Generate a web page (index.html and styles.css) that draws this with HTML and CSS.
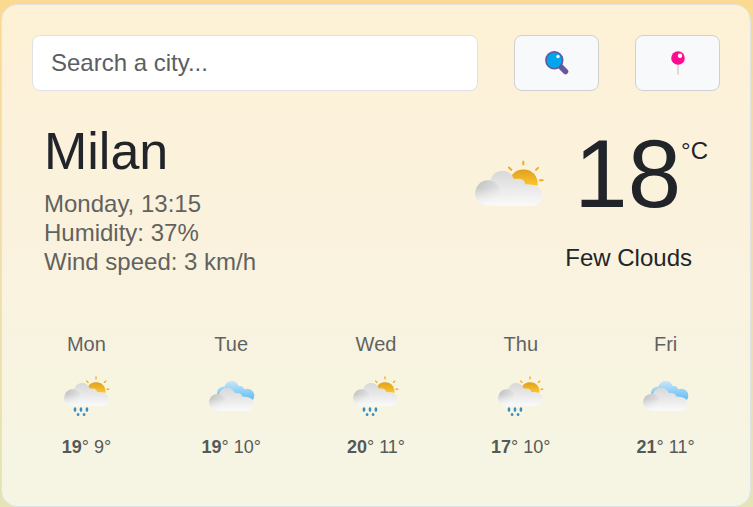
FILE: index.html
```html
<!DOCTYPE html>
<html lang="en">
<head>
<meta charset="utf-8">
<meta name="viewport" content="width=device-width, initial-scale=1">
<title>Weather</title>
<link rel="stylesheet" href="styles.css">
</head>
<body>
<svg class="defs" aria-hidden="true">
  <defs>
    <linearGradient id="sun-fill" x1="0" y1="0" x2="0" y2="1"><stop offset="0" stop-color="#e0a021"/><stop offset="1" stop-color="#fcc62c"/></linearGradient>
    <linearGradient id="cloud-fill" x1="0" y1="0" x2="0" y2="1"><stop offset="0" stop-color="#d8d8d9"/><stop offset="1" stop-color="#fafafa"/></linearGradient>
    <linearGradient id="puff-fill" x1="0.1" y1="0.2" x2="0.9" y2="0.8"><stop offset="0" stop-color="#c6c6c7"/><stop offset="1" stop-color="#ececed"/></linearGradient>
    <linearGradient id="sky-fill" x1="0" y1="0" x2="0" y2="1"><stop offset="0" stop-color="#c5e7fb"/><stop offset="1" stop-color="#62bdf2"/></linearGradient>
    <linearGradient id="base-fade" x1="0" y1="0" x2="0" y2="1"><stop offset="0.3" stop-color="#fafafa" stop-opacity="0"/><stop offset="1" stop-color="#fafafa"/></linearGradient>
    <symbol id="cloud" viewBox="30 60 210 110">
      <path d="M72 167C50 167 34 150 34 129C34 107 52 90 74 90H80C84 73 98 62 116 62C132 62 143 71 149 85C153 88 157 86 162 86C174 86 182 91 184 103C191 101 197 103 204 104C222 105 235 118 235 135C235 153 221 167 203 167Z" fill="url(#cloud-fill)"/>
      <circle cx="72" cy="128" r="38" fill="url(#puff-fill)"/>
      <circle cx="72" cy="128" r="38" fill="url(#base-fade)"/>
    </symbol>
    <symbol id="sun" viewBox="130 30 110 80">
      <path d="M139 84C147 65 161 58 180 58C204 58 221 77 221 100V106H150Z" fill="url(#sun-fill)"/>
      <path d="M178 34V43M135 52L142 59M222 53L216 59M228 90H236" stroke="#f0ad1f" stroke-width="6" stroke-linecap="round"/>
    </symbol>
    <symbol id="partly" viewBox="30 30 210 140">
      <use href="#sun" x="130" y="30" width="110" height="80"/>
      <use href="#cloud" x="30" y="60" width="210" height="110"/>
    </symbol>
    <symbol id="showers" viewBox="30 30 210 190">
      <use href="#sun" x="130" y="30" width="110" height="80"/>
      <use href="#cloud" x="30" y="60" width="210" height="110"/>
      <g fill="#338fc5"><ellipse cx="83" cy="182" rx="6" ry="11"/><ellipse cx="110" cy="182" rx="6" ry="11"/><ellipse cx="137" cy="182" rx="6" ry="11"/><ellipse cx="97" cy="204" rx="6" ry="7"/><ellipse cx="124" cy="204" rx="6" ry="7"/></g>
    </symbol>
    <symbol id="cloudy" viewBox="30 30 210 190">
      <path d="M70 118C67 95 80 78 103 78C108 62 120 53 136 53C152 53 163 62 168 76C179 73 188 78 193 90C207 85 220 88 230 98C241 108 240 126 232 138H100Z" fill="url(#sky-fill)"/>
      <use href="#cloud" x="30" y="81" width="210" height="110"/>
    </symbol>
  </defs>
</svg>
<main class="card">
  <form class="search">
    <input class="search-input" type="search" placeholder="Search a city..." aria-label="Search a city">
    <button class="search-button" type="button" aria-label="Search">
      <svg class="button-icon" viewBox="0 0 24 24" aria-hidden="true"><path d="M15.5 15.5L20.5 20.5" stroke="#65589c" stroke-width="5.5" stroke-linecap="round"/><circle cx="9.300" cy="9.300" r="8.400" fill="#00a6ed" stroke="#65589c" stroke-width="1.600"/><circle cx="13" cy="5.500" r="1.700" fill="#f4faff"/></svg>
    </button>
    <button class="search-button" type="button" aria-label="Use current location">
      <svg class="button-icon" viewBox="0 0 24 24" aria-hidden="true"><path d="M12 12V23.500" stroke="#d3d3d3" stroke-width="1.600"/><circle cx="12" cy="7" r="6.800" fill="#ff0a93"/><circle cx="14" cy="4.800" r="2.200" fill="#fff"/></svg>
    </button>
  </form>
  <section class="current">
    <div>
      <h1 class="city">Milan</h1>
      <ul class="details">
        <li>Monday, 13:15</li>
        <li>Humidity: 37%</li>
        <li>Wind speed: 3 km/h</li>
      </ul>
    </div>
    <div class="conditions">
      <div class="reading">
        <svg class="current-icon" role="img" aria-label="Partly cloudy"><use href="#partly"/></svg>
        <span class="temperature">18</span><span class="unit">°C</span>
      </div>
      <p class="description">Few Clouds</p>
    </div>
  </section>
  <section class="forecast">
    <div class="day"><h2 class="day-name">Mon</h2><svg class="day-icon" aria-hidden="true"><use href="#showers"/></svg><p class="range"><strong>19</strong>° 9°</p></div>
    <div class="day"><h2 class="day-name">Tue</h2><svg class="day-icon" aria-hidden="true"><use href="#cloudy"/></svg><p class="range"><strong>19</strong>° 10°</p></div>
    <div class="day"><h2 class="day-name">Wed</h2><svg class="day-icon" aria-hidden="true"><use href="#showers"/></svg><p class="range"><strong>20</strong>° 11°</p></div>
    <div class="day"><h2 class="day-name">Thu</h2><svg class="day-icon" aria-hidden="true"><use href="#showers"/></svg><p class="range"><strong>17</strong>° 10°</p></div>
    <div class="day"><h2 class="day-name">Fri</h2><svg class="day-icon" aria-hidden="true"><use href="#cloudy"/></svg><p class="range"><strong>21</strong>° 11°</p></div>
  </section>
</main>
</body>
</html>
```
FILE: styles.css
```css
* {
  box-sizing: border-box;
}

h1, h2, p, ul {
  margin: 0;
  padding: 0;
  font-weight: 400;
}

html {
  min-height: 100%;
  background: linear-gradient(#fbd98f, #f6dca3 30%, #e4e4b6);
}

body {
  margin: 0;
  padding: 4px 2px 0 1px;
  color: #212529;
  font: 24px/29px "Liberation Sans", Arial, sans-serif;
}

.defs {
  position: absolute;
  width: 0;
  height: 0;
}

.card {
  padding: 30px 12px 48px;
  border: 1px solid #dee2e6;
  border-radius: 16px;
  background: rgba(255, 255, 255, 0.62);
}

.search {
  display: flex;
  gap: 36px;
  padding: 0 18px;
}

.search-input {
  flex: 1;
  min-width: 0;
  height: 56px;
  padding: 0 18px;
  border: 1px solid #dee2e6;
  border-radius: 8px;
  background: #fff;
  color: #212529;
  font: inherit;
  appearance: none;
}

.search-input::placeholder {
  color: #5b5e62;
}

.search-button {
  display: flex;
  flex: 0 0 85px;
  align-items: center;
  justify-content: center;
  padding: 0;
  border: 1px solid #ced0d3;
  border-radius: 8px;
  background: #f8f9fa;
}

.button-icon {
  width: 24px;
  height: 24px;
}

.current {
  display: flex;
  justify-content: space-between;
  padding: 29px 30px 0;
}

.city {
  margin-bottom: 7px;
  font-size: 52px;
  line-height: 62px;
}

.details {
  list-style: none;
  opacity: 0.7;
}

.reading {
  display: flex;
}

.current-icon {
  width: 70px;
  height: 47px;
  margin: 40px 30px 0 0;
}

.temperature {
  font-size: 96px;
  line-height: 108px;
}

.unit {
  padding-top: 16px;
}

.description {
  padding: 15px 16px 0 0;
  text-align: right;
}

.forecast {
  display: grid;
  grid-template-columns: repeat(5, 1fr);
  padding-top: 56px;
}

.day {
  display: flex;
  flex-direction: column;
  align-items: center;
}

.day-name {
  font-size: 20px;
  line-height: 24px;
  opacity: 0.7;
}

.day-icon {
  width: 47px;
  height: 42px;
  margin: 20px 0 18px;
}

.range {
  font-size: 18px;
  line-height: 22px;
  opacity: 0.75;
}
```
